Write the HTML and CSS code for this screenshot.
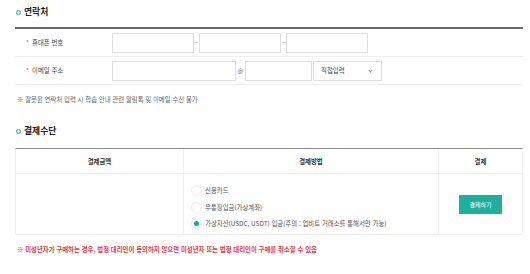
FILE: index.html
```html
<!DOCTYPE html>
<html lang="ko">
<head>
<meta charset="utf-8">
<link rel="stylesheet" href="styles.css">
</head>
<body>
<div class="page">
  <h2 class="sec-title"><span class="dot"></span>연락처</h2>
  <div class="form">
    <div class="row">
      <div class="label"><span class="req">*</span>휴대폰 번호</div>
      <div class="fields">
        <span class="input w82"></span><span class="sep">-</span><span class="input w82"></span><span class="sep">-</span><span class="input w82"></span>
      </div>
    </div>
    <div class="row">
      <div class="label"><span class="req">*</span>이메일 주소</div>
      <div class="fields">
        <span class="input w124"></span><span class="at">@</span><span class="input w67"></span><span class="select">직접입력<span class="chev"></span></span>
      </div>
    </div>
  </div>
  <p class="note">※ 잘못된 연락처 입력 시 학습 안내 관련 알림톡 및 이메일 수신 불가</p>

  <h2 class="sec-title t2"><span class="dot"></span>결제수단</h2>
  <div class="pay">
    <div class="th">결제금액</div>
    <div class="th bl">결제방법</div>
    <div class="th bl">결제</div>
    <div class="td"></div>
    <div class="td bl methods">
      <label class="opt"><span class="radio"></span>신용카드</label>
      <label class="opt"><span class="radio"></span>무통장입금(가상계좌)</label>
      <label class="opt"><span class="radio on"></span>가상자산(USDC, USDT) 입금(주의 : 업비트 거래소를 통해서만 가능)</label>
    </div>
    <div class="td bl btncell"><span class="btn">결제하기</span></div>
  </div>
  <p class="warn">※ 미성년자가 구매하는 경우, 법정 대리인이 동의하지 않으면 미성년자 또는 법정 대리인이 구매를 취소할 수 있음</p>
</div>
</body>
</html>
```
FILE: styles.css
```css
* { box-sizing: border-box; }
html, body { margin: 0; padding: 0; background: #fff; }
body {
  font-family: "Noto Sans CJK KR", "Noto Sans", sans-serif;
  font-size: 6.4px;
  color: #444;
  width: 530px;
  height: 274px;
  overflow: hidden;
}
.page { padding: 6px 7px 0 15px; }
.sec-title {
  margin: 0 0 9px 0;
  height: 12px;
  line-height: 12px;
  font-size: 8.8px;
  font-weight: 700;
  color: #222;
  display: flex;
  align-items: center;
}
.sec-title .dot {
  width: 5px;
  height: 5px;
  border-radius: 50%;
  border: 1.3px solid #1fae9c;
  background: #e9f7f5;
  margin: 0 3px 0 1px;
}
.sec-title.t2 { margin-top: 20px; margin-bottom: 11px; }
.form { border-top: 2px solid #6b6b6b; }
.row {
  display: flex;
  align-items: center;
  height: 28px;
  border-bottom: 1px solid #efefef;
}
.label {
  width: 97px;
  padding-left: 11px;
  color: #444;
}
.req { color: #d45c5c; margin-right: 3px; }
.fields { display: flex; align-items: center; }
.input, .select {
  display: inline-block;
  height: 20px;
  border: 1px solid #dedede;
  background: #fff;
}
.w82 { width: 82px; }
.w124 { width: 124px; }
.w67 { width: 67px; }
.sep { width: 5px; text-align: center; color: #888; }
.at { width: 9px; text-align: center; color: #666; }
.select {
  width: 69px;
  margin-left: 1px;
  display: flex;
  align-items: center;
  padding-left: 7px;
  color: #444;
  position: relative;
}
.chev {
  position: absolute;
  right: 9px;
  top: 7px;
  width: 3px;
  height: 3px;
  border-right: 1px solid #999;
  border-bottom: 1px solid #999;
  transform: rotate(45deg);
}
.note {
  margin: 10px 0 0 2px;
  line-height: 10px;
  color: #666;
}
.pay {
  display: grid;
  grid-template-columns: 167px 255px 1fr;
  border-top: 1px solid #8a8a8a;
  border-left: 1px solid #f0f0f0;
  border-right: 1px solid #f0f0f0;
}
.th {
  height: 25px;
  display: flex;
  align-items: center;
  justify-content: center;
  font-weight: 700;
  color: #333;
  border-bottom: 1px solid #f0f0f0;
}
.bl { border-left: 1px solid #f0f0f0; }
.td {
  height: 61px;
  border-bottom: 1px solid #f0f0f0;
}
.methods {
  display: flex;
  flex-direction: column;
  justify-content: center;
  padding: 6px 0 0 7px;
}
.opt {
  display: flex;
  align-items: center;
  height: 16.5px;
  color: #555;
}
.radio {
  width: 11px;
  height: 11px;
  border-radius: 50%;
  border: 1px solid #ececec;
  background: #fff;
  margin-right: 3px;
  display: flex;
  align-items: center;
  justify-content: center;
}
.radio.on::after {
  content: "";
  width: 5px;
  height: 5px;
  border-radius: 50%;
  background: #1ca896;
}
.btncell {
  display: flex;
  align-items: center;
  justify-content: center;
}
.btn {
  width: 43px;
  height: 19px;
  background: #1fb09d;
  color: #fff;
  display: flex;
  align-items: center;
  justify-content: center;
  font-size: 6px;
}
.warn {
  margin: 10px 0 0 2px;
  line-height: 10px;
  color: #e03a3e;
  font-weight: 700;
}
```
